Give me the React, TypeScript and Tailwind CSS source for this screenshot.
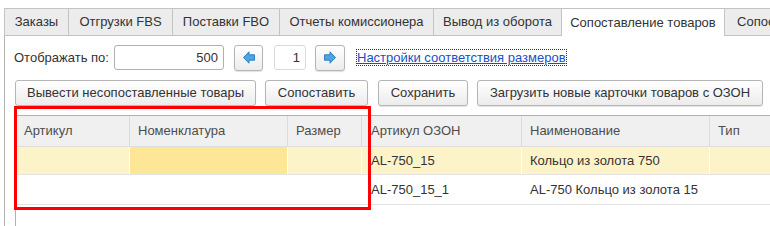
import React from "react";

const tabs: { label: string; w: string; active?: boolean; first?: boolean }[] = [
  { label: "Заказы", w: "w-[65px]", first: true },
  { label: "Отгрузки FBS", w: "w-[104px]" },
  { label: "Поставки FBO", w: "w-[107px]" },
  { label: "Отчеты комиссионера", w: "w-[154px]" },
  { label: "Вывод из оборота", w: "w-[128px]" },
  { label: "Сопоставление товаров", w: "w-[163px]", active: true },
  { label: "Сопоставление размеров", w: "w-[180px]" },
];

function Arrow({ dir }: { dir: "left" | "right" }) {
  return (
    <svg width="12" height="13" viewBox="0 0 12 13" className={dir === "right" ? "scale-x-[-1]" : ""}>
      <path d="M0.5 6.5 L6 0.8 L6 3.8 L11.5 3.8 L11.5 9.2 L6 9.2 L6 12.2 Z" fill="#49a5e3" stroke="#2f7fc1" strokeWidth="1" strokeLinejoin="round" />
    </svg>
  );
}

const btn =
  "flex items-center justify-center h-[26px] rounded-[3px] border border-[#b5b5b5] bg-gradient-to-b from-[#ffffff] to-[#ececec] text-[#333333] shadow-[0_1px_1px_rgba(0,0,0,0.12)]";

export default function App() {
  return (
    <div
      className="relative w-[770px] h-[226px] overflow-hidden bg-white text-[13px] text-[#333333]"
      style={{ fontFamily: '"Liberation Sans", Arial, sans-serif' }}
    >
      {/* Tabs */}
      <div className="flex pl-[4px] pt-[8px]">
        {tabs.map((t) => (
          <div
            key={t.label}
            className={`${t.w} shrink-0 h-[28px] flex items-center justify-center whitespace-nowrap border-t border-r border-[#c3c3c3] ${
              t.first ? "border-l" : ""
            } ${t.active ? "bg-white border-b-0" : "bg-[#ececec] border-b"}`}
          >
            {t.label}
          </div>
        ))}
      </div>

      {/* Panel */}
      <div className="ml-[4px] h-[200px] border-l border-[#b4b4b4] pl-[9px] pt-[9px]">
        {/* Row 1 */}
        <div className="flex items-center h-[25px]">
          <div className="w-[100px] whitespace-nowrap">Отображать по:</div>
          <div className="w-[110px] h-[25px] rounded-[3px] border border-[#b0b0b0] flex items-center justify-end pr-[5px]">
            500
          </div>
          <div className={`${btn} ml-[10px] w-[29px] h-[25px]`}>
            <Arrow dir="left" />
          </div>
          <div className="ml-[11px] w-[32px] h-[25px] rounded-[3px] border border-[#d9d9d9] flex items-center justify-end pr-[5px]">
            1
          </div>
          <div className={`${btn} ml-[9px] w-[30px] h-[25px]`}>
            <Arrow dir="right" />
          </div>
          <div className="ml-[11px] border border-dotted border-[#333333] px-[0px] leading-[15px] text-[#1a4fc4] underline whitespace-nowrap">
            Настройки соответствия размеров
          </div>
        </div>

        {/* Row 2 */}
        <div className="flex items-center mt-[10px] ml-[1px]">
          <div className={`${btn} w-[241px]`}>Вывести несопоставленные товары</div>
          <div className={`${btn} ml-[9px] w-[103px]`}>Сопоставить</div>
          <div className={`${btn} ml-[10px] w-[90px]`}>Сохранить</div>
          <div className={`${btn} ml-[9px] w-[286px]`}>Загрузить новые карточки товаров с ОЗОН</div>
        </div>

        {/* Table */}
        <div className="mt-[9px] ml-[1px] w-[900px] h-[200px] border-l border-t border-[#b0b0b0]">
          <div className="flex h-[31px] bg-[#f0f0f0] border-b border-[#dedede] text-[#4d4d4d]">
            <div className="w-[114px] shrink-0 border-r border-[#dcdcdc] pl-[8px] flex items-center">Артикул</div>
            <div className="w-[158px] shrink-0 border-r border-[#dcdcdc] pl-[8px] flex items-center">Номенклатура</div>
            <div className="w-[74px] shrink-0 border-r border-[#dcdcdc] pl-[8px] flex items-center">Размер</div>
            <div className="w-[160px] shrink-0 border-r border-[#dcdcdc] pl-[9px] flex items-center">Артикул ОЗОН</div>
            <div className="w-[188px] shrink-0 border-r border-[#dcdcdc] pl-[8px] flex items-center">Наименование</div>
            <div className="w-[120px] shrink-0 pl-[8px] flex items-center">Тип</div>
          </div>
          <div className="flex h-[28px] bg-[#fdf3c8] border-b border-[#e4e4e4]">
            <div className="w-[114px] shrink-0 border-r border-white" />
            <div className="w-[158px] shrink-0 border-r border-white bg-[#fde695]" />
            <div className="w-[74px] shrink-0 border-r border-white" />
            <div className="w-[160px] shrink-0 border-r border-white pl-[9px] flex items-center">AL-750_15</div>
            <div className="w-[188px] shrink-0 border-r border-white pl-[8px] flex items-center">Кольцо из золота 750</div>
            <div className="w-[120px] shrink-0" />
          </div>
          <div className="flex h-[30px] bg-white border-b border-[#e4e4e4]">
            <div className="w-[114px] shrink-0" />
            <div className="w-[158px] shrink-0" />
            <div className="w-[74px] shrink-0" />
            <div className="w-[160px] shrink-0 pl-[9px] flex items-center">AL-750_15_1</div>
            <div className="w-[188px] shrink-0 pl-[8px] flex items-center whitespace-nowrap">AL-750 Кольцо из золота 15</div>
            <div className="w-[120px] shrink-0" />
          </div>
        </div>
      </div>

      {/* Red highlight overlay */}
      <div className="absolute left-[14px] top-[106px] w-[357px] h-[104px] border-[3px] border-[#ff0000] pointer-events-none" />
    </div>
  );
}
